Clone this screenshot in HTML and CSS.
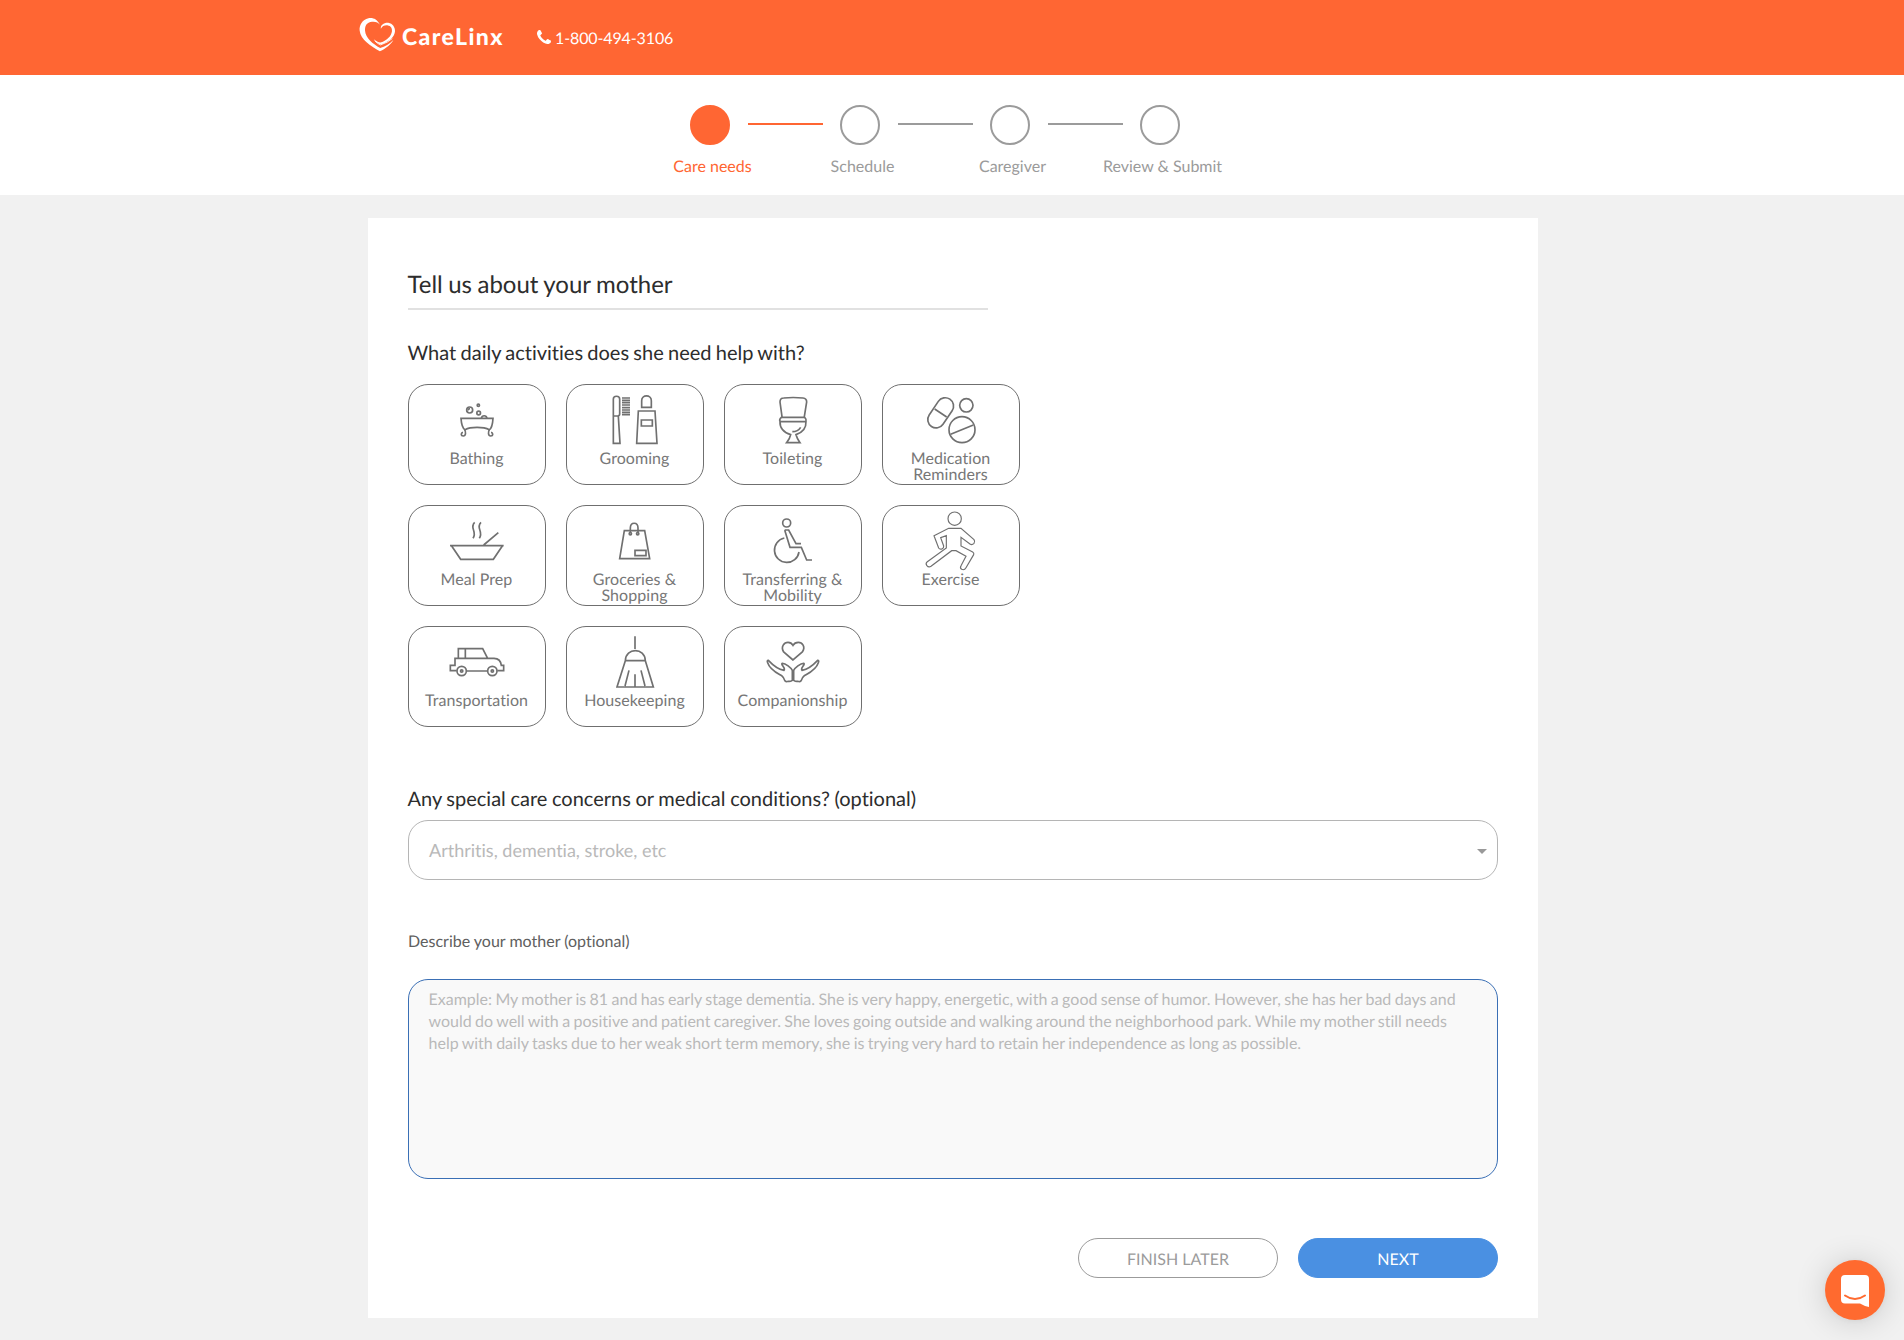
FILE: index.html
```html
<!DOCTYPE html>
<html lang="en">
<head>
<meta charset="utf-8">
<title>CareLinx - Care needs</title>
<link rel="stylesheet" href="styles.css">
</head>
<body>
<header class="header">
  <a class="logo">
    <svg class="logo-mark" viewBox="58 51 110 104" aria-hidden="true">
      <path fill="#fff" d="M120 74C112 57 98 52 86 55C68 59 58 76 60 92C63 118 92 137 120 153C139 143 153 133 160 119C149 131 135 139 121 143C99 132 77 112 76 92C75 79 80 69 92 66C104 63 115 66 120 74Z"/>
      <path fill="#fff" d="M123 86C121 74 133 67 145 68C158 70 166 82 165 94C163 110 149 124 122 133C113 129 106 124 102 117C109 123 115 126 122 127C142 119 154 108 156 93C157 83 152 77 144 76C134 75 127 78 123 86Z"/>
      <path fill="none" stroke="#fff" stroke-width="2.5" d="M105 122Q113 131 122 134Q146 126 157 115"/>
    </svg>
    <span class="logo-text">CareLinx</span>
  </a>
  <a class="phone">
    <svg class="phone-icon" viewBox="0 0 1408 1408" aria-hidden="true"><path fill="#fff" d="M1408 1112q0 27-10 70.500t-21 68.500q-21 50-122 106-94 51-186 51-27 0-52.500-3.500t-57.500-12.500-47.500-14.500-55.500-20.500-49-18q-98-35-175-83-128-79-264.500-215.500t-215.500-264.500q-48-77-83-175-3-9-18-49t-20.500-55.500-14.500-47.500-12.500-57.500-3.500-52.500q0-92 51-186 56-101 106-122 25-11 68.500-21t70.500-10q14 0 21 3 18 6 53 76 11 19 30 54t35 63.500 31 53.500q3 4 17.500 25t21.500 35.500 7 28.500q0 20-28.500 50t-62 55-62 53-28.500 46q0 9 5 22.500t8.500 20.500 14 24 11.500 19q76 137 174 235t235 174q2 1 19 11.500t24 14 20.500 8.500 22.500 5q18 0 46-28.500t53-62 55-62 50-28.500q14 0 28.500 7t35.500 21.500 25 17.500q25 15 53.500 31t63.500 35 54 30q70 35 76 53 3 7 3 21z"/></svg>
    <span class="phone-number">1-800-494-3106</span>
  </a>
</header>

<nav class="stepper">
  <div class="track">
    <span class="dot dot-active"></span><span class="line line-active"></span>
    <span class="dot"></span><span class="line"></span>
    <span class="dot"></span><span class="line"></span>
    <span class="dot"></span>
  </div>
  <div class="step-labels">
    <span class="label-active">Care needs</span><span>Schedule</span><span>Caregiver</span><span>Review &amp; Submit</span>
  </div>
</nav>

<main class="card">
  <h1 class="title">Tell us about your mother</h1>
  <h2 class="question">What daily activities does she need help with?</h2>
  <div class="tiles">
    <button class="tile">
      <svg class="icon" viewBox="27 15 408 195"><path d="M183 115H279C278 132 275 145 268 149C250 140 212 140 195 149C186 144 184 130 183 115ZM244 114C246 105 259 105 261 114"/><path d="M194 149C198 156 198 168 190 168C182 168 182 158 189 157M268 149C264 156 264 168 272 168C280 168 280 158 273 157"/><circle cx="209" cy="90" r="9"/><path d="M204 91Q205 86 210 86"/><circle cx="236" cy="99" r="5.500"/><circle cx="235" cy="76" r="3.500"/></svg>
      <span>Bathing</span>
    </button>
    <button class="tile">
      <svg class="icon" viewBox="501 15 408 195"><path d="M640 107V57C640 46 659 46 659 57V102Q659 108 653 108H640V190H660L655 109M725 82V62C725 43 754 43 754 62V82ZM715 93H765L771 190H710ZM724 120H757V138H724Z"/><path d="M666 54H690M666 61H690M666 68H690M666 75H690M666 83H690M666 90H690M666 97H690M666 104H690"/></svg>
      <span>Grooming</span>
    </button>
    <button class="tile">
      <svg class="icon" viewBox="30 15 408 195"><path d="M201 110L195 66Q195 54 206 54Q234 51 264 54Q275 55 275 66L268 110M199 112H269Q275 118 273 124C274 145 262 158 243 164C246 175 250 181 255 188H215C221 181 225 174 227 164C207 158 194 145 195 124Q192 118 199 112ZM195 125H273M232 155Q249 155 257 142"/></svg>
      <span>Toileting</span>
    </button>
    <button class="tile">
      <svg class="icon" viewBox="504 15 408 195"><rect x="652" y="49" width="50" height="99" rx="25" transform="rotate(34 677 98.500)"/><path d="M659 87L695 111M707 163L775 135"/><circle cx="754" cy="76" r="20"/><circle cx="741" cy="149" r="39"/></svg>
      <span>Medication Reminders</span>
    </button>
    <button class="tile">
      <svg class="icon" viewBox="27 18 408 195"><path d="M150 137H311M155 138L182 178H280L307 138M251 135L295 98M224 67C207 84 233 94 219 115M243 67C226 84 252 94 238 115"/></svg>
      <span>Meal Prep</span>
    </button>
    <button class="tile">
      <svg class="icon" viewBox="501 18 408 195"><path d="M673 92H734L749 176H659ZM691 100V84C691 65 714 65 714 84V100M705 151H738V167H705Z"/><circle cx="691" cy="101" r="3.500"/><circle cx="713" cy="101" r="3.500"/></svg>
      <span>Groceries &amp; Shopping</span>
    </button>
    <button class="tile">
      <svg class="icon" viewBox="30 18 408 195"><circle cx="215" cy="69" r="12"/><path d="M209 90H221L243 131H258M209 90L225 142H259L275 180H291M208 114A37 37 0 1 0 252 156"/></svg>
      <span>Transferring &amp; Mobility</span>
    </button>
    <button class="tile">
      <svg class="icon thin" viewBox="504 18 408 195"><circle cx="719" cy="56" r="20"/><path d="M701 85H738L777 119Q781 124 777 130Q771 136 765 132L738 112V138L773 156Q778 159 776 164L753 203Q748 212 740 208Q734 204 738 197L753 169L723 152H710L648 199Q641 204 635 196Q631 190 637 185L694 144V107L677 113L686 138Q687 144 681 147Q674 149 671 144L657 107Z"/></svg>
      <span>Exercise</span>
    </button>
    <button class="tile">
      <svg class="icon" viewBox="27 21 408 195"><path d="M170 152H151V136H165V115H175V86H248L263 115H282Q302 116 304 136H311V152H292M200 153H261M175 115H263M196 86V115"/><circle cx="185" cy="153" r="14"/><circle cx="277" cy="153" r="14"/><circle cx="185" cy="153" r="3.500"/><circle cx="277" cy="153" r="3.500"/></svg>
      <span>Transportation</span>
    </button>
    <button class="tile">
      <svg class="icon" viewBox="501 21 408 195"><path d="M705 49V87M676 122C677 82 735 82 736 122ZM676 122L651 201H760L736 122M687 151L675 198M705 163V199M723 151L735 198"/></svg>
      <span>Housekeeping</span>
    </button>
    <button class="tile">
      <svg class="icon" viewBox="30 21 408 195"><path d="M234 120L206 96C196 80 208 67 219 67Q229 67 234 76Q239 67 250 67C261 67 273 80 262 96Z"/><path id="hand" d="M232 181V151C228 143 212 130 202 130Q198 132 205 140Q210 147 207 151C194 149 179 141 160 121Q155 121 158 128C165 150 188 160 200 167Q207 173 209 181Q211 187 220 184Q226 185 232 181Z"/><use href="#hand" transform="matrix(-1 0 0 1 468 0)"/></svg>
      <span>Companionship</span>
    </button>
  </div>

  <h2 class="question concerns">Any special care concerns or medical conditions? (optional)</h2>
  <div class="select"><span>Arthritis, dementia, stroke, etc</span><i class="caret"></i></div>
  <label class="describe" for="about">Describe your mother (optional)</label>
  <textarea class="about" id="about" placeholder="Example: My mother is 81 and has early stage dementia. She is very happy, energetic, with a good sense of humor. However, she has her bad days and would do well with a positive and patient caregiver. She loves going outside and walking around the neighborhood park. While my mother still needs help with daily tasks due to her weak short term memory, she is trying very hard to retain her independence as long as possible."></textarea>
  <div class="actions">
    <button class="btn">FINISH LATER</button>
    <button class="btn btn-next">NEXT</button>
  </div>
</main>

<button class="chat" aria-label="Open chat">
  <svg class="chat-icon" viewBox="0 0 28 32"><path fill="#fff" d="M4 0H24Q28 0 28 4V32Q23 31 19 28.500H4Q0 28.500 0 24.500V4Q0 0 4 0Z"/><path fill="none" stroke="#ff6a2f" stroke-width="2" stroke-linecap="round" d="M4 20.500Q14 27.500 24 20.500"/></svg>
</button>
</body>
</html>
```
FILE: styles.css
```css
* { box-sizing: border-box; }
body {
  margin: 0;
  min-height: 1340px;
  background: #f1f1f1;
  font-family: Lato, sans-serif;
  font-size: 16px;
  font-variant-ligatures: none;
  text-rendering: geometricPrecision;
  color: #2d2d2d;
}
button, textarea {
  font: inherit;
  font-variant-ligatures: none;
  text-rendering: inherit;
}
.header {
  display: flex;
  align-items: flex-start;
  height: 75px;
  padding-left: 359px;
  background: #ff6633;
  color: #fff;
}
.logo { display: flex; width: 178px; padding-top: 17px; }
.logo-mark { width: 37px; height: 35px; }
.logo-text {
  margin: 4px 0 0 6px;
  font-size: 23px;
  font-weight: 900;
  line-height: 30px;
  letter-spacing: 1.4px;
}
.phone { display: flex; padding-top: 28px; }
.phone-icon { width: 14px; height: 14px; margin: 2px 4px 0 0; }
.phone-number { line-height: 22px; letter-spacing: -0.12px; }

.stepper { height: 120px; padding-top: 30px; background: #fff; }
.track { display: flex; align-items: center; gap: 18px; width: 490px; margin-left: 690px; }
.dot {
  flex: none;
  width: 40px;
  height: 40px;
  border: 2px solid #9b9b9b;
  border-radius: 50%;
}
.dot-active { background: #ff6633; border-color: #ff6633; }
.line { width: 75px; height: 2px; margin: 0 -1px 2px 0; background: #9b9b9b; }
.line-active { background: #ff6633; }
.step-labels {
  display: grid;
  grid-template-columns: repeat(4, 150px);
  margin: 12px 0 0 637.5px;
  text-align: center;
  line-height: 20px;
  color: #9b9b9b;
}
.label-active { color: #ff6633; }

.card {
  width: 1170px;
  height: 1100px;
  margin: 23px 0 0 368px;
  padding: 41px 40px 40px;
  background: #fff;
}
.title {
  width: 580px;
  height: 51px;
  margin: 0;
  border-bottom: 2px solid #e1e1e1;
  font-size: 24px;
  font-weight: 400;
  line-height: 51px;
  text-indent: -0.5px;
  word-spacing: -0.67px;
}
.question {
  margin: 31px 0 18px;
  font-size: 20px;
  font-weight: 400;
  line-height: 25px;
  text-indent: -0.5px;
  word-spacing: -0.85px;
}
.concerns { margin: 60px 0 8px; word-spacing: -0.5px; }
.tiles { display: grid; grid-template-columns: repeat(4, 138px); gap: 20px; }
.tile {
  display: flex;
  flex-direction: column;
  align-items: center;
  height: 101px;
  padding: 0;
  border: 1px solid #6f6f6f;
  border-radius: 20px;
  background: #fff;
  color: #777;
  line-height: 16px;
}
.tile span { margin: 1px 1px 0 0; letter-spacing: 0.06px; }
.icon {
  flex: none;
  width: 136px;
  height: 65px;
  overflow: visible;
  fill: none;
  stroke: #707070;
  stroke-width: 5;
}
.thin { stroke-width: 3.5; }
.select {
  display: flex;
  align-items: center;
  justify-content: space-between;
  height: 60px;
  padding: 0 10px 0 20px;
  border: 1px solid #b5b5b5;
  border-radius: 20px;
  font-size: 18px;
  color: #b9b9b9;
}
.caret { border: 5px solid transparent; border-top-color: #999; border-bottom: 0; margin-top: 3px; }
.describe { display: block; margin: 50px 0 26px; line-height: 23px; color: #606060; }
.about {
  display: block;
  width: 1090px;
  height: 200px;
  padding: 9px 20px 9px 19.5px;
  border: 1px solid #3a6fb5;
  border-radius: 20px;
  background: #f9f9f9;
  line-height: 22px;
  word-spacing: -0.7px;
  resize: none;
}
.about::placeholder { color: #b9b9b9; }
.actions { display: flex; justify-content: flex-end; gap: 20px; margin-top: 59px; }
.btn {
  width: 200px;
  height: 40px;
  padding: 2px 0 0;
  border: 1px solid #9b9b9b;
  border-radius: 20px;
  background: #fff;
  color: #9b9b9b;
}
.btn-next { border-color: #4a90e2; background: #4a90e2; color: #fff; }
.chat {
  position: fixed;
  right: 19px;
  bottom: 20px;
  width: 60px;
  height: 60px;
  padding: 0;
  border: 0;
  border-radius: 50%;
  background: #ff6a2f;
  box-shadow: 0 1px 6px rgba(0, 0, 0, 0.06), 0 2px 32px rgba(0, 0, 0, 0.16);
}
.chat-icon { display: block; width: 28px; height: 32px; margin: 1px 0 0 16px; }
```
